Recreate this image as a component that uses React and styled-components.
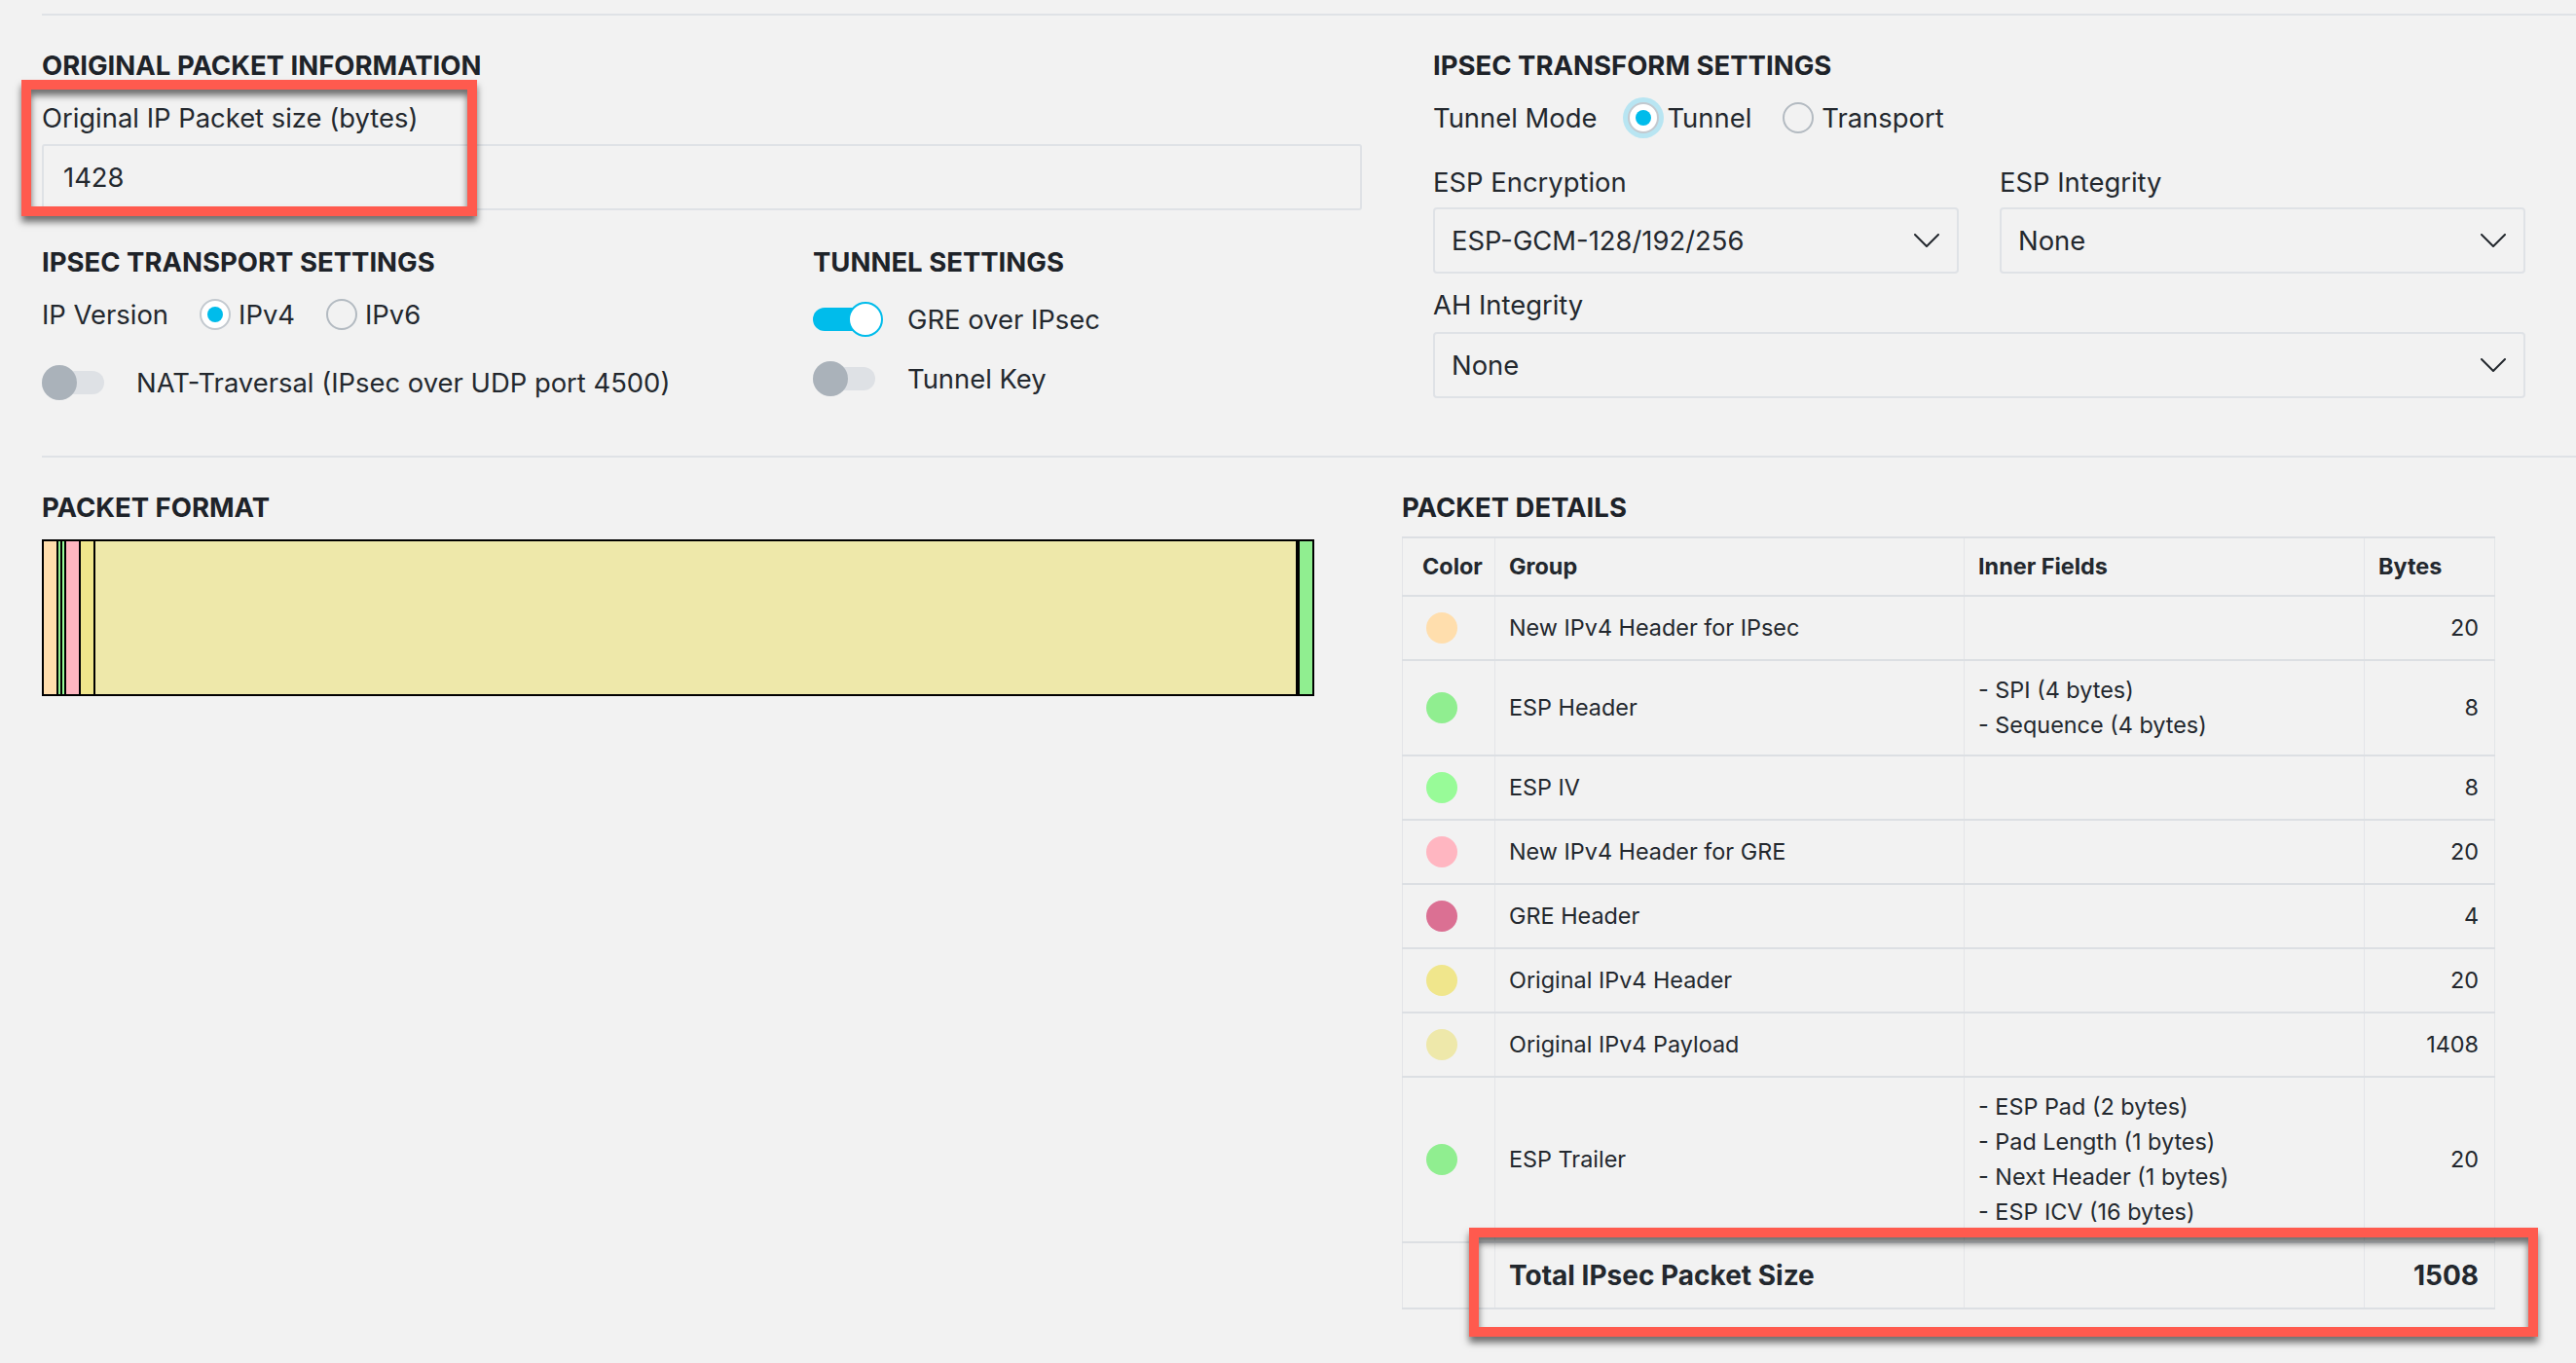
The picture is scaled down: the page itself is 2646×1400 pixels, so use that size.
import React from 'react'
import styled, { createGlobalStyle } from 'styled-components';

const segments = [
    { name: 'New IPv4 Header for IPsec', color: '#FFDEAD', bytes: 20 },
    { name: 'ESP Header', color: '#90EE90', bytes: 8, fields: ['SPI (4 bytes)', 'Sequence (4 bytes)'] },
    { name: 'ESP IV', color: '#98FB98', bytes: 8 },
    { name: 'New IPv4 Header for GRE', color: '#FFB6C1', bytes: 20 },
    { name: 'GRE Header', color: '#DB7093', bytes: 4 },
    { name: 'Original IPv4 Header', color: '#F0E68C', bytes: 20 },
    { name: 'Original IPv4 Payload', color: '#EEE8AA', bytes: 1408, fill: true },
    { name: 'ESP Trailer', color: '#90EE90', bytes: 20, fields: ['ESP Pad (2 bytes)', 'Pad Length (1 bytes)', 'Next Header (1 bytes)', 'ESP ICV (16 bytes)'] },
];

const total = segments.reduce((sum, s) => sum + s.bytes, 0);

// stripe width in px, borders eat into the small ones
const stripeWidth = (bytes) => Math.max(0, Math.round(bytes * 0.917 - 5.3));

const Chevron = () => (
    <svg width="26" height="14" viewBox="0 0 26 14" fill="none">
        <polyline points="1,1 13,13 25,1" stroke="#23282e" strokeWidth="2" strokeLinejoin="round" strokeLinecap="round" />
    </svg>
);

const App = () => {
    return (
        <Page>
            <GlobalStyle />
            <Rule />
            <TopSection>
                <Column>
                    <Heading>ORIGINAL PACKET INFORMATION</Heading>
                    <Field $mt={20}>
                        <Label>Original IP Packet size (bytes)</Label>
                        <TextInput readOnly value="1428" />
                        <Highlight $top={-22} $left={-21} $width={468} $height={140} />
                    </Field>
                    <SubGrid>
                        <Column>
                            <Heading>IPSEC TRANSPORT SETTINGS</Heading>
                            <RadioRow $mt={20}>
                                <span>IP Version</span>
                                <Option><Radio $checked />IPv4</Option>
                                <Option><Radio />IPv6</Option>
                            </RadioRow>
                            <ToggleRow $mt={35}>
                                <Switch />
                                <span>NAT-Traversal (IPsec over UDP port 4500)</span>
                            </ToggleRow>
                        </Column>
                        <Column>
                            <Heading>TUNNEL SETTINGS</Heading>
                            <ToggleRow $mt={24}>
                                <Switch $on />
                                <span>GRE over IPsec</span>
                            </ToggleRow>
                            <ToggleRow $mt={25}>
                                <Switch />
                                <span>Tunnel Key</span>
                            </ToggleRow>
                        </Column>
                    </SubGrid>
                </Column>

                <Column>
                    <Heading>IPSEC TRANSFORM SETTINGS</Heading>
                    <RadioRow $mt={20}>
                        <span>Tunnel Mode</span>
                        <Option><Radio $checked $focus />Tunnel</Option>
                        <Option><Radio />Transport</Option>
                    </RadioRow>
                    <SelectGrid>
                        <Field>
                            <Label>ESP Encryption</Label>
                            <Select $mt={9}><span>ESP-GCM-128/192/256</span><Chevron /></Select>
                        </Field>
                        <Field>
                            <Label>ESP Integrity</Label>
                            <Select $mt={9}><span>None</span><Chevron /></Select>
                        </Field>
                    </SelectGrid>
                    <Field $mt={15}>
                        <Label>AH Integrity</Label>
                        <Select $mt={11}><span>None</span><Chevron /></Select>
                    </Field>
                </Column>
            </TopSection>

            <Rule $mt={57} />

            <BottomSection>
                <Column>
                    <Heading>PACKET FORMAT</Heading>
                    <PacketBar>
                        {segments.filter(s => s.fill || stripeWidth(s.bytes) > 0).map(s => (
                            <Stripe key={s.name} $color={s.color} $fill={s.fill}
                                style={s.fill ? undefined : { width: stripeWidth(s.bytes) }} />
                        ))}
                    </PacketBar>
                </Column>

                <Column>
                    <Heading>PACKET DETAILS</Heading>
                    <TableWrap>
                        <Table>
                            <thead>
                                <tr>
                                    <Th $w={95} $pl={20}>Color</Th>
                                    <Th $w={482}>Group</Th>
                                    <Th $w={411}>Inner Fields</Th>
                                    <Th $w={134}>Bytes</Th>
                                </tr>
                            </thead>
                            <tbody>
                                {segments.map(s => (
                                    <tr key={s.name}>
                                        <Td $pl={24}><Dot $color={s.color} /></Td>
                                        <Td>{s.name}</Td>
                                        <Td>
                                            {s.fields && s.fields.map(f => <div key={f}>- {f}</div>)}
                                        </Td>
                                        <Td $right>{s.bytes}</Td>
                                    </tr>
                                ))}
                                <TotalRow>
                                    <Td />
                                    <Td>Total IPsec Packet Size</Td>
                                    <Td />
                                    <Td $right>{total}</Td>
                                </TotalRow>
                            </tbody>
                        </Table>
                        <Highlight $top={710} $left={69} $width={1098} $height={112} />
                    </TableWrap>
                </Column>
            </BottomSection>
        </Page>
    )
}

const GlobalStyle = createGlobalStyle`
    *, *::before, *::after { box-sizing: border-box; }
    html, body {
        margin: 0;
        background: #f2f2f2;
    }
    body {
        font-family: Inter, "Noto Sans", sans-serif;
        color: #23282e;
        font-size: 27.4px;
        line-height: 34px;
    }
`;

const Page = styled.div`
    padding: 14px 0 0 43px;
    min-height: 1400px;
`;

const Rule = styled.div`
    height: 2px;
    background: #dfe2e6;
    margin-top: ${p => p.$mt || 0}px;
`;

const TopSection = styled.div`
    display: grid;
    grid-template-columns: 1356px 1122px;
    column-gap: 73px;
    padding-top: 34px;
`;

const BottomSection = styled.div`
    display: grid;
    grid-template-columns: 1307px 1123px;
    column-gap: 90px;
    padding-top: 34px;
`;

const Column = styled.div`
    display: flex;
    flex-direction: column;
`;

const Heading = styled.h2`
    margin: 0;
    font-size: 27.5px;
    line-height: 34px;
    font-weight: 700;
    color: #1e2329;
`;

const Field = styled.div`
    position: relative;
    display: flex;
    flex-direction: column;
    margin-top: ${p => p.$mt || 0}px;
`;

const Label = styled.label`
    font-size: 27.4px;
    line-height: 34px;
`;

const TextInput = styled.input`
    margin-top: 10px;
    height: 68px;
    padding: 0 20px;
    border: 2px solid #dfe2e6;
    border-radius: 3px;
    background: transparent;
    font-family: inherit;
    font-size: 27.4px;
    color: #23282e;
    outline: none;
`;

const SubGrid = styled.div`
    display: grid;
    grid-template-columns: 792px 1fr;
    margin-top: 36px;
`;

const RadioRow = styled.div`
    display: flex;
    align-items: center;
    gap: 32px;
    height: 34px;
    margin-top: ${p => p.$mt || 0}px;
`;

const Option = styled.label`
    display: flex;
    align-items: center;
    gap: 8px;
`;

const Radio = styled.span`
    width: 32px;
    height: 32px;
    border-radius: 50%;
    border: 2px solid ${p => p.$checked ? '#c3c9cf' : '#b3bac1'};
    background: ${p => p.$checked ? '#ffffff' : 'transparent'};
    display: inline-flex;
    align-items: center;
    justify-content: center;
    flex: none;
    box-shadow: ${p => p.$focus ? '0 0 0 5px #b8e5f2' : 'none'};

    &::after{
        content: '';
        display: ${p => p.$checked ? 'block' : 'none'};
        width: 16px;
        height: 16px;
        border-radius: 50%;
        background: #00bceb;
    }
`;

const ToggleRow = styled.div`
    display: flex;
    align-items: center;
    gap: 33px;
    height: 36px;
    margin-top: ${p => p.$mt || 0}px;
`;

const Switch = styled.span`
    position: relative;
    flex: none;
    width: 64px;
    height: 36px;

    &::before{
        content: '';
        position: absolute;
        left: 0;
        right: 0;
        top: 6px;
        height: 24px;
        border-radius: 12px;
        background: ${p => p.$on ? '#00bceb' : '#dee1e5'};
    }

    &::after{
        content: '';
        position: absolute;
        top: 0;
        left: ${p => p.$on ? '36px' : '0'};
        width: 36px;
        height: 36px;
        border-radius: 50%;
        background: ${p => p.$on ? '#ffffff' : '#aab2ba'};
        border: ${p => p.$on ? '2px solid #00bceb' : 'none'};
    }
`;

const SelectGrid = styled.div`
    display: grid;
    grid-template-columns: 540px 540px;
    column-gap: 42px;
    margin-top: 32px;
`;

const Select = styled.div`
    display: flex;
    align-items: center;
    justify-content: space-between;
    height: 68px;
    margin-top: ${p => p.$mt || 0}px;
    padding: 0 18px 0 17px;
    border: 2px solid #dfe2e6;
    border-radius: 4px;
    font-size: 27.4px;
`;

const PacketBar = styled.div`
    display: flex;
    margin-top: 16px;
    height: 161px;
    border: 2px solid #000;
`;

const Stripe = styled.div`
    box-sizing: content-box;
    flex: ${p => p.$fill ? '1 1 0' : 'none'};
    background: ${p => p.$color};
    border-right: 2px solid #000;

    &:last-child{
        border-right: none;
        border-left: 2px solid #000;
    }
`;

const TableWrap = styled.div`
    position: relative;
    margin-top: 13px;
`;

const Table = styled.table`
    width: 1122px;
    border-collapse: collapse;
    table-layout: fixed;
    font-size: 23.4px;
    line-height: 36px;
    border-top: 2px solid #dcdfe3;
    border-bottom: 2px solid #dcdfe3;
`;

const Th = styled.th`
    width: ${p => p.$w}px;
    text-align: left;
    font-weight: 700;
    padding: 11px 14px 11px ${p => p.$pl || 14}px;
    border-left: 1px solid #e3e5e8;
    border-right: 1px solid #e3e5e8;
    border-bottom: 2px solid #dcdfe3;
`;

const Td = styled.td`
    vertical-align: middle;
    text-align: ${p => p.$right ? 'right' : 'left'};
    padding: 12px ${p => p.$right ? 16 : 14}px 12px ${p => p.$pl || 14}px;
    border-left: 1px solid #e3e5e8;
    border-right: 1px solid #e3e5e8;
    border-bottom: 2px solid #dcdfe3;
`;

const TotalRow = styled.tr`
    font-size: 28px;
    font-weight: 700;
    line-height: 42px;
`;

const Dot = styled.span`
    display: block;
    width: 32px;
    height: 32px;
    margin: 4px 0;
    border-radius: 50%;
    background: ${p => p.$color};
`;

const Highlight = styled.div`
    position: absolute;
    top: ${p => p.$top}px;
    left: ${p => p.$left}px;
    width: ${p => p.$width}px;
    height: ${p => p.$height}px;
    border: 10px solid #ff5a4e;
    pointer-events: none;
    box-shadow: 0 6px 7px rgba(0, 0, 0, 0.55), inset 0 6px 7px rgba(0, 0, 0, 0.55);
`;

export default App;
